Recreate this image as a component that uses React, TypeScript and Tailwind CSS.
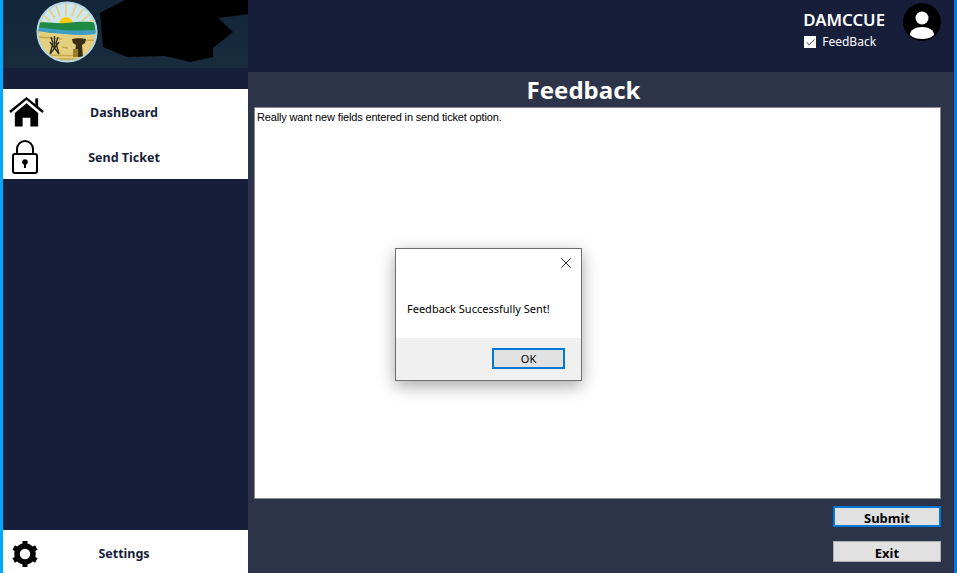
import type React from "react";
import { Check, X } from "lucide-react";

const font = "font-['Noto_Sans',sans-serif]";

const Seal = () => (
  <svg width="62" height="62" viewBox="0 0 62 62" className="mt-[1px] shrink-0">
    <defs>
      <clipPath id="seal">
        <circle cx="31" cy="31" r="28.500" />
      </clipPath>
    </defs>
    <circle cx="31" cy="31" r="30.500" fill="#b5d6e2" />
    <g clipPath="url(#seal)">
      <rect width="62" height="26" fill="#cfe6ef" />
      <g stroke="#e6cf68" strokeWidth="1.5">
        <path d="M30 15V3M24 15L20 4M36 15L40 4M19 17L12 7M41 17L48 7M14 20L5 12M46 20L55 12M11 23L1 18M49 23L59 18" />
      </g>
      <path d="M23 23a7 7 0 0 1 14 0z" fill="#fbc90e" />
      <path d="M0 22c12-2 18 1 30 0s20-2 32 0v10H0z" fill="#1f8a45" />
      <path d="M0 26c14 1 26 5 62 3v4C42 36 20 32 0 30z" fill="#3f9dc4" />
      <path d="M0 30c18 2 40 6 62 3v29H0z" fill="#e3cf7d" />
      <path d="M2 36l24 2M36 40l24-1M3 54l50 1M26 46l6 1M6 58l44 0" stroke="#c4a84e" strokeWidth="1.4" />
      <path d="M15 36l2 6-3 11M22 36l-2 6 3 11M18.500 35v12M14 53l9-12M23 53l-9-12" stroke="#2b2b1e" strokeWidth="1.3" fill="none" />
      <path d="M36 38c4-1 10-1 14 0l-1 4-3 2 1 12h-9l2-12-3-2z" fill="#3a2f14" />
      <path d="M37 48h5v8h-5z" fill="#9f7d26" />
    </g>
  </svg>
);

const HomeIcon = () => (
  <svg width="36" height="32" viewBox="0 0 36 32" className="mr-[1px]">
    <path d="M27 2h3v9h-3z" fill="#000" />
    <path d="M1 16L18 2l17 14" fill="none" stroke="#000" strokeWidth="2.4" />
    <path d="M6 17L18 7l12 10v14h-8v-9h-8v9H6z" fill="#000" />
  </svg>
);

const LockIcon = () => (
  <svg width="28" height="36" viewBox="0 0 28 36" className="mr-[4px]">
    <rect x="2" y="15" width="24" height="19" rx="2" fill="none" stroke="#000" strokeWidth="2" />
    <path d="M6 15V10a8 8 0 0 1 16 0v5" fill="none" stroke="#000" strokeWidth="2" />
    <circle cx="14" cy="23" r="2.8" fill="#000" />
    <path d="M13 24h2v5h-2z" fill="#000" />
  </svg>
);

const GearIcon = () => (
  <svg width="28" height="28" viewBox="0 0 28 28" className="mt-[2px] mr-[4px]">
    <circle cx="14" cy="14" r="8" fill="none" stroke="#000" strokeWidth="5.5" />
    <g stroke="#000" strokeWidth="5">
      <path d="M14 1v5M14 22v5M2.700 7.500l4.400 2.500M20.900 18l4.400 2.500M2.700 20.500L7.100 18M20.900 10l4.400-2.500" />
    </g>
  </svg>
);

const Avatar = () => (
  <svg width="38" height="38" viewBox="0 0 38 38">
    <circle cx="19" cy="19" r="19" fill="#000" />
    <circle cx="19" cy="15" r="6.500" fill="#fff" />
    <path d="M7 32c0-5 5-8 12-8s12 3 12 8c-3 3-8 4-12 4s-9-1-12-4z" fill="#fff" />
  </svg>
);

const NavRow = ({ icon, label, className }: { icon: React.ReactNode; label: string; className: string }) => (
  <div className={`relative flex items-center justify-center bg-white pr-[3px] ${className}`}>
    <div className="absolute left-[6px] flex w-[36px] justify-center">{icon}</div>
    <span className={`${font} pt-[4px] text-[12.500px] font-bold text-[#171e3a]`}>{label}</span>
  </div>
);

const ActionButton = ({ label, focused }: { label: string; focused?: boolean }) => (
  <button
    className={`${font} h-[21px] w-[108px] bg-[#e1e1e1] pt-[3px] text-[13px] leading-none font-bold text-black ${
      focused ? "border-2 border-[#0078d7]" : "border border-[#adadad]"
    }`}
  >
    {label}
  </button>
);

export default function App() {
  return (
    <div className="relative flex h-[573px] w-[957px] overflow-hidden bg-[#171e3a]">
      <div className="w-[3px] bg-[#00a8ff]" />

      {/* Sidebar */}
      <aside className="flex w-[245px] flex-col">
        <div className="flex h-[68px] overflow-hidden bg-gradient-to-b from-[#13263a] to-[#182c3e] pl-[33px]">
          <Seal />
          <svg width="150" height="68" viewBox="0 0 150 68" className="ml-[2px] shrink-0">
            <path d="M0 13L25 0h125v14l-32 4 15 14-20 16v9l-23 5-25-6-38 1-24-10z" fill="#000" />
          </svg>
        </div>
        <div className="mt-[21px] flex flex-col">
          <NavRow icon={<HomeIcon />} label="DashBoard" className="h-[45px]" />
          <NavRow icon={<LockIcon />} label="Send Ticket" className="h-[45px]" />
        </div>
        <NavRow icon={<GearIcon />} label="Settings" className="mt-auto h-[43px] pt-[2px]" />
      </aside>

      {/* Main */}
      <div className="flex flex-1 flex-col">
        <header className="flex h-[72px] justify-end pt-[3px] pr-[13px]">
          <div className="mr-[18px] flex flex-col pt-[6px]">
            <span className={`${font} text-[16.800px] leading-[22px] font-semibold text-white`}>DAMCCUE</span>
            <label className={`${font} mt-[2px] ml-[1px] flex items-center gap-[6px] text-[12px] leading-[18px] text-white`}>
              <span className="flex h-[12px] w-[12px] items-center justify-center bg-white">
                <Check size={11} strokeWidth={2} className="text-[#333333]" />
              </span>
              FeedBack
            </label>
          </div>
          <Avatar />
        </header>

        <main className="flex flex-1 flex-col bg-[#2d3349] pr-[13px] pl-[6px]">
          <h1 className={`${font} h-[35px] pr-[28px] text-center text-[24px] leading-[36px] font-bold text-white`}>Feedback</h1>
          <div className="h-[392px] border border-[#8a8a8a] bg-white px-[2px] py-[2px] font-['Liberation_Sans',sans-serif] text-[11px] leading-[14px] tracking-[-0.15px] text-black">
            Really want new fields entered in send ticket option.
          </div>
          <div className="mt-[7px] flex flex-col items-end gap-[14px]">
            <ActionButton label="Submit" focused />
            <ActionButton label="Exit" />
          </div>
        </main>
      </div>

      <div className="w-[3px] bg-[#0078d7]" />

      {/* Message box */}
      <div className="absolute top-[248px] left-[395px] flex h-[133px] w-[187px] flex-col border border-[#6f6f6f] bg-white shadow-[0_5px_16px_rgba(0,0,0,0.35)]">
        <div className="flex h-[89px] flex-col">
          <X size={18} strokeWidth={1.1} className="mt-[5px] ml-[161px] text-black" />
          <p className={`${font} mt-[29px] pl-[11px] text-[11px] leading-[16px] text-black`}>Feedback Successfully Sent!</p>
        </div>
        <div className="flex flex-1 items-start justify-end bg-[#f0f0f0] pt-[10px] pr-[16px]">
          <button className={`${font} h-[21px] w-[73px] border-2 border-[#0078d7] bg-[#e1e1e1] text-[11px] leading-none text-black`}>
            OK
          </button>
        </div>
      </div>
    </div>
  );
}
